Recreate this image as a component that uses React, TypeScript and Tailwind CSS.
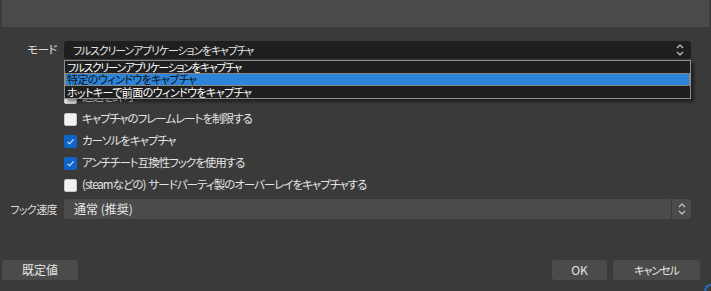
import React from "react";

const font = "[font-family:'Noto_Sans_CJK_JP','Noto_Sans',sans-serif] [font-feature-settings:'palt']";

function Chevrons({ className = "" }: { className?: string }) {
  return (
    <svg width="8" height="12" viewBox="0 0 8 12" className={className} fill="none" stroke="#c8c8c8" strokeWidth="1.2">
      <path d="M1 4 L4 1 L7 4" />
      <path d="M1 8 L4 11 L7 8" />
    </svg>
  );
}

function Check({ checked, label }: { checked: boolean; label: string }) {
  return (
    <div className="flex items-center h-[22px]">
      {checked ? (
        <div className="w-[13px] h-[13px] rounded-[2px] bg-[#0f63c9] flex items-center justify-center">
          <svg width="9" height="9" viewBox="0 0 9 9" fill="none" stroke="#dfe9f6" strokeWidth="1.1">
            <path d="M1.5 4.8 L3.6 6.8 L7.5 2.3" />
          </svg>
        </div>
      ) : (
        <div className="w-[13px] h-[13px] rounded-[2px] bg-[#f2f2f2] border border-[#c9c9c9]" />
      )}
      <span className="ml-[5px] text-[11.5px] tracking-[-1px] text-[#e4e4e4] leading-none whitespace-pre">{label}</span>
    </div>
  );
}

export default function App() {
  return (
    <div className={`relative w-[711px] h-[291px] bg-[#3a3a3a] overflow-hidden flex flex-col ${font}`}>
      <div className="mx-[2px] h-[27px] bg-[#4a4a4a]" />

      {/* Mode row */}
      <div className="flex items-center mt-[14px] relative z-10">
        <div className="w-[57px] text-right text-[11.5px] tracking-[-0.5px] text-[#dcdcdc] leading-none">モード</div>
        <div className="ml-[7px] relative w-[627px]">
          <div className="h-[18px] rounded-[3px] bg-[#1f1f1f] flex items-center pl-[9px] pr-[7px]">
            <span className="text-[10.8px] tracking-[-1px] text-[#e6e6e6] leading-none flex-1">フルスクリーンアプリケーションをキャプチャ</span>
            <Chevrons />
          </div>
          <div className="absolute left-0 top-[19px] w-[627px] border border-[#8e8e8e] bg-[#1f1f1f] shadow-[3px_3px_3px_rgba(0,0,0,0.45)]">
            <div className="h-[12px] flex items-center pl-[2px] text-[10.8px] tracking-[-1.3px] text-white leading-none">フルスクリーンアプリケーションをキャプチャ</div>
            <div className="h-[13px] flex items-center pl-[1px] text-[11px] tracking-[-0.6px] text-[#111] leading-none bg-[#2d84d9] border border-dotted border-[#e0882e]">特定のウィンドウをキャプチャ</div>
            <div className="h-[12px] flex items-center pl-[2px] text-[11px] tracking-[-0.6px] text-white leading-none">ホットキーで前面のウィンドウをキャプチャ</div>
          </div>
        </div>
      </div>

      {/* Checkboxes */}
      <div className="ml-[64px] mt-[27px] flex flex-col">
        <Check checked={false} label="透過を許可" />
        <Check checked={false} label="キャプチャのフレームレートを制限する" />
        <Check checked={true} label="カーソルをキャプチャ" />
        <Check checked={true} label="アンチチート互換性フックを使用する" />
        <Check checked={false} label="(steamなどの)  サードパーティ製のオーバーレイをキャプチャする" />
      </div>

      {/* Hook speed */}
      <div className="flex items-center mt-[3px]">
        <div className="w-[57px] text-right text-[11px] tracking-[-0.6px] text-[#dcdcdc] leading-none">フック速度</div>
        <div className="ml-[7px] w-[627px] h-[20px] rounded-[3px] bg-[#4b4b4b] flex items-center">
          <span className="flex-1 pl-[10px] text-[12px] text-[#e6e6e6] leading-none">通常 (推奨)</span>
          <div className="w-[20px] h-full border-l border-[#3a3a3a] flex items-center justify-center">
            <Chevrons />
          </div>
        </div>
      </div>

      {/* Buttons */}
      <div className="mt-auto mb-[11px] flex items-center px-[2px]">
        <div className="w-[76px] h-[20px] rounded-[3px] bg-[#4b4b4b] flex items-center justify-center text-[12px] text-[#e6e6e6] leading-none">既定値</div>
        <div className="flex-1" />
        <div className="w-[55px] h-[20px] rounded-[3px] bg-[#4b4b4b] flex items-center justify-center text-[12px] text-[#e6e6e6] leading-none">OK</div>
        <div className="ml-[6px] mr-[9px] w-[87px] h-[20px] rounded-[3px] bg-[#4b4b4b] flex items-center justify-center text-[11px] tracking-[-1px] text-[#e6e6e6] leading-none">キャンセル</div>
      </div>

      <div className="absolute right-[-7px] bottom-[-7px] w-[14px] h-[14px] rounded-full border-2 border-[#1f6fd1]" />
    </div>
  );
}
